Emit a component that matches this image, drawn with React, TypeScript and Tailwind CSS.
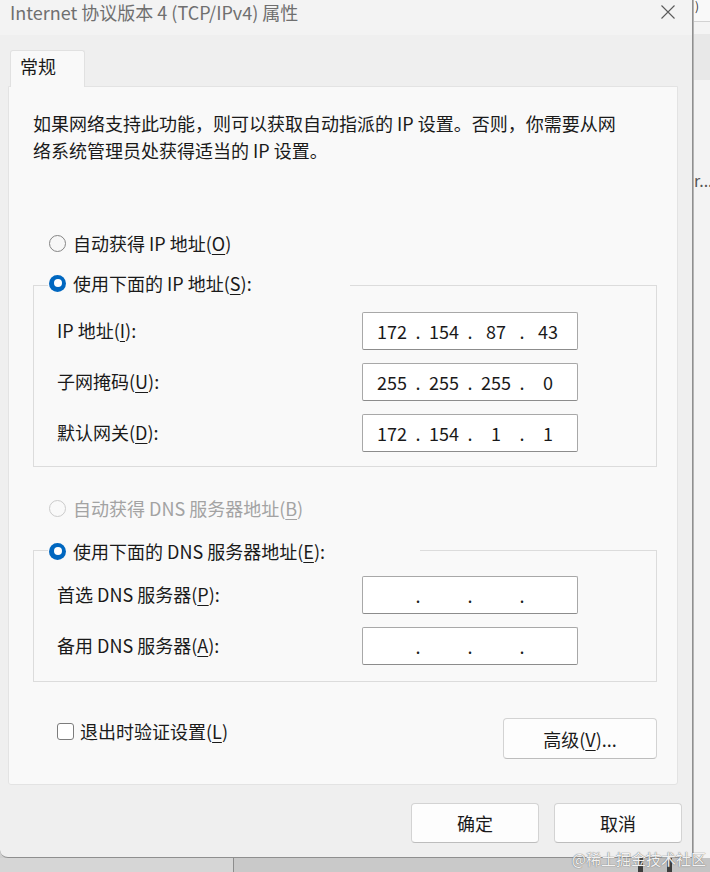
import React from "react";

const U = ({ c }: { c: string }) => <span className="underline underline-offset-[3px] decoration-1">{c}</span>;

function Radio({ state }: { state: "on" | "off" | "disabled" }) {
  if (state === "on")
    return (
      <span className="w-[17px] h-[17px] rounded-full bg-[#0067c0] flex items-center justify-center shrink-0">
        <span className="w-[8px] h-[8px] rounded-full bg-white" />
      </span>
    );
  return (
    <span
      className={
        state === "off"
          ? "w-[17px] h-[17px] rounded-full border border-[#858585] bg-[#f7f7f7] shrink-0"
          : "w-[17px] h-[17px] rounded-full border border-[#cbcbcb] bg-[#f9f9f9] shrink-0"
      }
    />
  );
}

function IpBox({ parts }: { parts: string[] }) {
  return (
    <div className="w-[216px] h-[38px] bg-white border border-[#a8a8a8] border-b-[#8c8c8c] rounded-[2px] flex items-center pl-[5px] text-[18px] leading-[24px] text-[#1a1a1a]">
      {parts.map((p, i) => (
        <React.Fragment key={i}>
          <span className="w-[48px] text-center">{p}</span>
          {i < 3 && <span className="w-[4px] flex justify-center">.</span>}
        </React.Fragment>
      ))}
    </div>
  );
}

function FieldRow({ label, parts }: { label: React.ReactNode; parts: string[] }) {
  return (
    <div className="h-[38px] flex items-center pl-[23px]">
      <div className="w-[305px] leading-[24px] -mt-[2px]">{label}</div>
      <IpBox parts={parts} />
    </div>
  );
}

function Btn({ children, w, h }: { children: React.ReactNode; w: string; h: string }) {
  return (
    <div
      className={`${w} ${h} bg-[#fdfdfd] border border-[#d3d3d3] border-b-[#bdbdbd] rounded-[4px] flex items-center justify-center leading-[24px] text-[#1a1a1a]`}
    >
      {children}
    </div>
  );
}

export default function App() {
  return (
    <div className="w-[710px] h-[872px] overflow-hidden relative flex flex-col bg-[#cfcfcf] font-['Noto_Sans_CJK_SC','Noto_Sans',sans-serif] text-[18px] text-[#1a1a1a]">
      <div className="flex h-[858px]">
        {/* Dialog */}
        <div className="w-[693px] shrink-0 h-[858px] flex flex-col bg-[#efefef] border-r border-b border-[#8f8f8f] rounded-bl-[8px] overflow-hidden">
          <div className="h-[35px] shrink-0 bg-[#f3f3f3] flex items-start pl-[10px]">
            <div className="leading-[24px] text-[#6f6f6f] whitespace-nowrap">Internet 协议版本 4 (TCP/IPv4) 属性</div>
            <svg className="ml-auto mr-[17px] mt-[5px]" width="14" height="14" viewBox="0 0 14 14">
              <path d="M0.5 0.5 L13.5 13.5 M13.5 0.5 L0.5 13.5" stroke="#5a5a5a" strokeWidth="1.1" fill="none" />
            </svg>
          </div>

          <div className="pt-[15px] flex flex-col">
            <div className="pl-[10px] flex">
              <div className="relative z-10 w-[75px] h-[37px] -mb-px bg-[#f9f9f9] border border-b-0 border-[#e1e1e1] rounded-t-[3px] pl-[9px] pt-[3px] leading-[24px]">
                常规
              </div>
            </div>

            <div className="ml-[8px] w-[670px] h-[699px] bg-[#f9f9f9] border border-[#e3e3e3] rounded-b-[3px] pl-[24px] pt-[23px] flex flex-col">
              <div className="leading-[27px] whitespace-nowrap">
                <div>如果网络支持此功能，则可以获取自动指派的 IP 设置。否则，你需要从网</div>
                <div>络系统管理员处获得适当的 IP 设置。</div>
              </div>

              <div className="mt-[67px] ml-[16px] h-[24px] flex items-center gap-[7px] leading-[24px]">
                <Radio state="off" />
                <span>
                  自动获得 IP 地址(<U c="O" />)
                </span>
              </div>

              <fieldset className="mt-[16px] w-[624px] border border-[#dcdcdc] pb-[14px]">
                <legend className="ml-[14px] w-[302px] h-[28px]">
                  <div className="h-[24px] flex items-center gap-[7px] pl-[1px] leading-[24px]">
                    <Radio state="on" />
                    <span>
                      使用下面的 IP 地址(<U c="S" />):
                    </span>
                  </div>
                </legend>
                <div className="pt-[13px] flex flex-col gap-[13px]">
                  <FieldRow label={<>IP 地址(<U c="I" />):</>} parts={["172", "154", "87", "43"]} />
                  <FieldRow label={<>子网掩码(<U c="U" />):</>} parts={["255", "255", "255", "0"]} />
                  <FieldRow label={<>默认网关(<U c="D" />):</>} parts={["172", "154", "1", "1"]} />
                </div>
              </fieldset>

              <div className="mt-[29px] ml-[16px] h-[24px] flex items-center gap-[7px] leading-[24px] text-[#a3a3a3]">
                <Radio state="disabled" />
                <span>
                  自动获得 DNS 服务器地址(<U c="B" />)
                </span>
              </div>

              <fieldset className="mt-[19px] w-[624px] border border-[#dcdcdc] pb-[16px]">
                <legend className="ml-[14px] w-[372px] h-[22px]">
                  <div className="h-[24px] flex items-center gap-[7px] pl-[1px] leading-[24px]">
                    <Radio state="on" />
                    <span>
                      使用下面的 DNS 服务器地址(<U c="E" />):
                    </span>
                  </div>
                </legend>
                <div className="pt-[15px] flex flex-col gap-[13px]">
                  <FieldRow label={<>首选 DNS 服务器(<U c="P" />):</>} parts={["", "", "", ""]} />
                  <FieldRow label={<>备用 DNS 服务器(<U c="A" />):</>} parts={["", "", "", ""]} />
                </div>
              </fieldset>

              <div className="mt-[36px] w-[624px] flex items-start justify-between">
                <div className="mt-[1px] pl-[24px] h-[24px] flex items-center gap-[6px] leading-[24px]">
                  <span className="w-[17px] h-[17px] rounded-[3px] border border-[#7c7c7c] bg-white shrink-0" />
                  <span>
                    退出时验证设置(<U c="L" />)
                  </span>
                </div>
                <Btn w="w-[154px]" h="h-[41px]">
                  <span>
                    高级(<U c="V" />)...
                  </span>
                </Btn>
              </div>
            </div>

            <div className="mt-[18px] pr-[10px] flex justify-end gap-[15px]">
              <Btn w="w-[128px]" h="h-[40px]">确定</Btn>
              <Btn w="w-[128px]" h="h-[40px]">取消</Btn>
            </div>
          </div>
        </div>

        {/* Background window strip on the right */}
        <div className="flex-1 min-w-0 flex flex-col bg-[#f3f3f3] border-l border-[#b4b4b4] overflow-hidden">
          <div className="h-[22px] bg-[#f9f9f9] border-b border-[#d2d2d2] text-[12px] leading-[12px] text-[#333] pl-[1px]">)</div>
          <div className="h-[12px] bg-[#f4f4f4]" />
          <div className="h-[46px] bg-[#e8e8e8]" />
          <div className="mt-[88px] text-[16px] leading-[24px] text-[#555] whitespace-nowrap">r...</div>
        </div>
      </div>

      {/* Bottom background strip */}
      <div className="h-[14px] flex">
        <div className="w-[233px] bg-[#d6d6d6]" />
        <div className="w-[1px] bg-[#8d8d8d]" />
        <div className="w-[404px] bg-[#c9c9c9]" />
        <div className="w-[5px] bg-[#3d3d3d]" />
        <div className="w-[24px] bg-[#bdbdbd]" />
        <div className="w-[5px] bg-[#3d3d3d]" />
        <div className="flex-1 bg-[#c4c4c4]" />
      </div>

      <div className="absolute right-[4px] bottom-[4px] text-[15px] leading-[18px] text-white/90 [text-shadow:0_0_1px_#777,0_0_1px_#777] whitespace-nowrap">
        @稀土掘金技术社区
      </div>
    </div>
  );
}
